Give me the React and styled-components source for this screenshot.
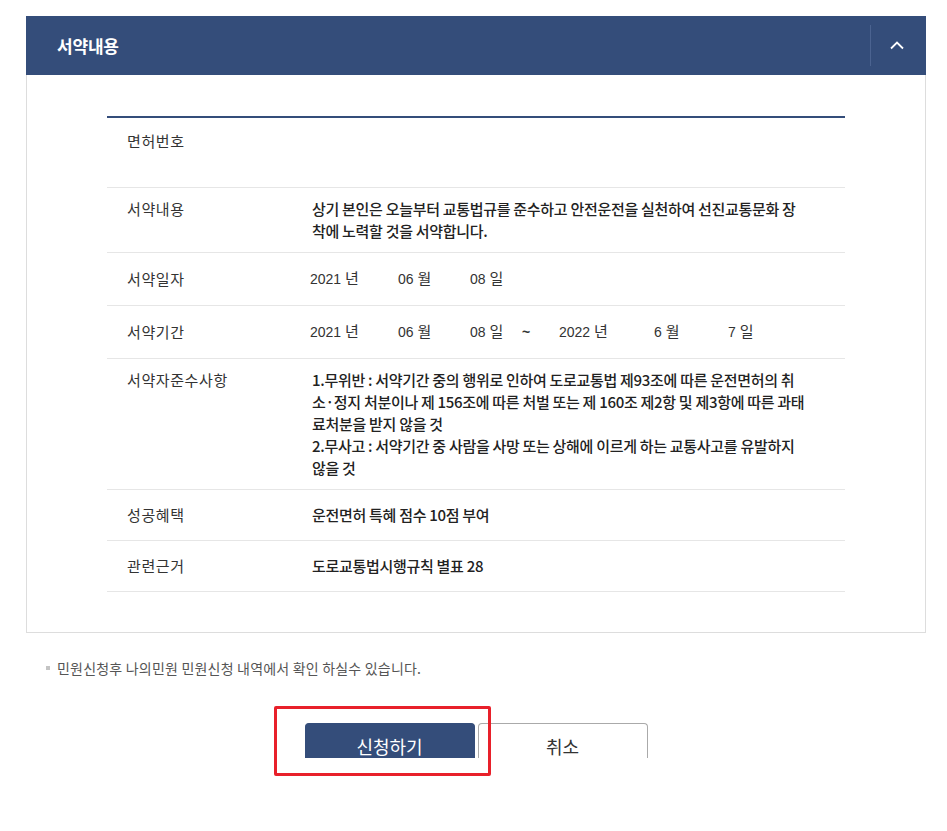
import React from 'react';
import styled, { createGlobalStyle } from 'styled-components';

const GlobalStyle = createGlobalStyle`
  html, body {
    margin: 0;
    padding: 0;
    background: #fff;
  }
  body {
    font-family: "Noto Sans CJK KR", "Liberation Sans", sans-serif;
    color: #333;
  }
`;

const rows = [
  { label: '면허번호', pt: 12, pb: 35, lines: [] },
  {
    label: '서약내용',
    pt: 10,
    pb: 10,
    lines: [
      '상기 본인은 오늘부터 교통법규를 준수하고 안전운전을 실천하여 선진교통문화 장',
      '착에 노력할 것을 서약합니다.',
    ],
  },
  {
    label: '서약일자',
    pt: 15,
    pb: 15,
    dates: [
      ['2021', '년', 88],
      ['06', '월', 72],
      ['08', '일', 50],
    ],
  },
  {
    label: '서약기간',
    pt: 15,
    pb: 15,
    dates: [
      ['2021', '년', 88],
      ['06', '월', 72],
      ['08', '일', 50],
      ['~', '', 39],
      ['2022', '년', 95],
      ['6', '월', 74],
      ['7', '일', 40],
    ],
  },
  {
    label: '서약자준수사항',
    pt: 10,
    pb: 10,
    lines: [
      '1.무위반 : 서약기간 중의 행위로 인하여 도로교통법 제93조에 따른 운전면허의 취',
      '소·정지 처분이나 제 156조에 따른 처벌 또는 제 160조 제2항 및 제3항에 따른 과태',
      '료처분을 받지 않을 것',
      '2.무사고 : 서약기간 중 사람을 사망 또는 상해에 이르게 하는 교통사고를 유발하지',
      '않을 것',
    ],
  },
  { label: '성공혜택', pt: 14, pb: 14, lines: ['운전면허 특혜 점수 10점 부여'] },
  { label: '관련근거', pt: 14, pb: 14, lines: ['도로교통법시행규칙 별표 28'] },
];

export default function App() {
  return (
    <Page>
      <GlobalStyle />
      <Panel>
        <PanelHead>
          <PanelTitle>서약내용</PanelTitle>
          <ToggleButton type="button" aria-label="접기">
            <svg width="16" height="10" viewBox="0 0 16 10" fill="none">
              <path d="M2 8.5 L8 2.5 L14 8.5" stroke="#fff" strokeWidth="1.8" />
            </svg>
          </ToggleButton>
        </PanelHead>
        <PanelBody>
          <Table>
            {rows.map(row => (
              <Row key={row.label} $pt={row.pt} $pb={row.pb}>
                <Label>{row.label}</Label>
                <Value>
                  {row.lines &&
                    row.lines.map(line => <Line key={line}>{line}</Line>)}
                  {row.dates && (
                    <DateLine>
                      {row.dates.map(([num, unit, w], i) => (
                        <DatePart key={i} $w={w}>
                          {num === '~' ? <Tilde>~</Tilde> : num} <Unit>{unit}</Unit>
                        </DatePart>
                      ))}
                    </DateLine>
                  )}
                </Value>
              </Row>
            ))}
          </Table>
        </PanelBody>
      </Panel>

      <Notice>민원신청후 나의민원 민원신청 내역에서 확인 하실수 있습니다.</Notice>

      <ButtonArea>
        <Buttons>
          <Highlight>
            <Button $primary type="button">신청하기</Button>
            <RedBox />
          </Highlight>
          <Button type="button">취소</Button>
        </Buttons>
      </ButtonArea>
    </Page>
  );
}

const Page = styled.div`
  padding: 16px 21px 40px 26px;
  min-height: 831px;
  box-sizing: border-box;
`;

const Panel = styled.section`
  border: 1px solid #ddd;
  border-top: none;
`;

const PanelHead = styled.div`
  display: flex;
  align-items: center;
  justify-content: space-between;
  height: 59px;
  margin: 0 -1px;
  background: #344d7a;
  padding-left: 31px;
`;

const PanelTitle = styled.h2`
  margin: 0;
  color: #fff;
  font-size: 17px;
  font-weight: 700;
  letter-spacing: -0.2px;
`;

const ToggleButton = styled.button`
  display: flex;
  align-items: center;
  justify-content: center;
  width: 56px;
  height: 41px;
  padding: 0 3px 2px 0;
  border: none;
  border-left: 1px solid #4b6390;
  background: transparent;
  cursor: pointer;
`;

const PanelBody = styled.div`
  padding: 41px 80px 40px;
`;

const Table = styled.div`
  border-top: 2px solid #344d7a;
`;

const Row = styled.div`
  display: grid;
  grid-template-columns: 205px 1fr;
  padding: ${p => p.$pt}px 0 ${p => p.$pb}px;
  border-bottom: 1px solid #e6e6e6;
  line-height: 22px;
`;

const Label = styled.div`
  padding-left: 20px;
  font-size: 15px;
  letter-spacing: 0.6px;
  color: #333;
`;

const Value = styled.div`
  font-size: 15px;
  font-weight: 500;
  color: #222;
  letter-spacing: -0.3px;
`;

const Line = styled.div`
  white-space: nowrap;
`;

const DateLine = styled.div`
  display: flex;
  margin-left: -2px;
  font-family: "Liberation Sans", "Noto Sans CJK KR", sans-serif;
  font-weight: 400;
  font-size: 14px;
  letter-spacing: 0;
  color: #333;
`;

const DatePart = styled.span`
  flex: none;
  width: ${p => p.$w}px;
  white-space: nowrap;
`;

const Unit = styled.span`
  font-size: 15px;
`;

const Tilde = styled.b`
  padding-left: 2px;
`;

const Notice = styled.p`
  position: relative;
  margin: 25px 0 0;
  padding-left: 31px;
  font-size: 14px;
  line-height: 20px;
  letter-spacing: 0.2px;
  color: #555;
  &::before {
    content: '';
    position: absolute;
    left: 20px;
    top: 8px;
    width: 4px;
    height: 4px;
    background: #c4c4c4;
  }
`;

const ButtonArea = styled.div`
  display: flex;
  justify-content: center;
  margin-top: 45px;
`;

const Buttons = styled.div`
  display: flex;
  gap: 3px;
  height: 35px;
`;

const Highlight = styled.div`
  position: relative;
`;

const RedBox = styled.div`
  position: absolute;
  left: -31px;
  top: -17px;
  width: 217px;
  height: 70px;
  box-sizing: border-box;
  border: 3px solid #e8202a;
  border-radius: 2px;
  pointer-events: none;
`;

const Button = styled.button`
  width: 170px;
  height: 35px;
  padding: 9px 0 0;
  box-sizing: border-box;
  border: 1px solid ${p => (p.$primary ? '#344d7a' : '#aaa')};
  border-bottom: none;
  border-radius: 4px 4px 0 0;
  background: ${p => (p.$primary ? '#344d7a' : '#fff')};
  color: ${p => (p.$primary ? '#fff' : '#333')};
  font-family: "Noto Sans CJK KR", sans-serif;
  font-size: 18px;
  line-height: 26px;
  overflow: hidden;
  vertical-align: top;
  cursor: pointer;
`;
